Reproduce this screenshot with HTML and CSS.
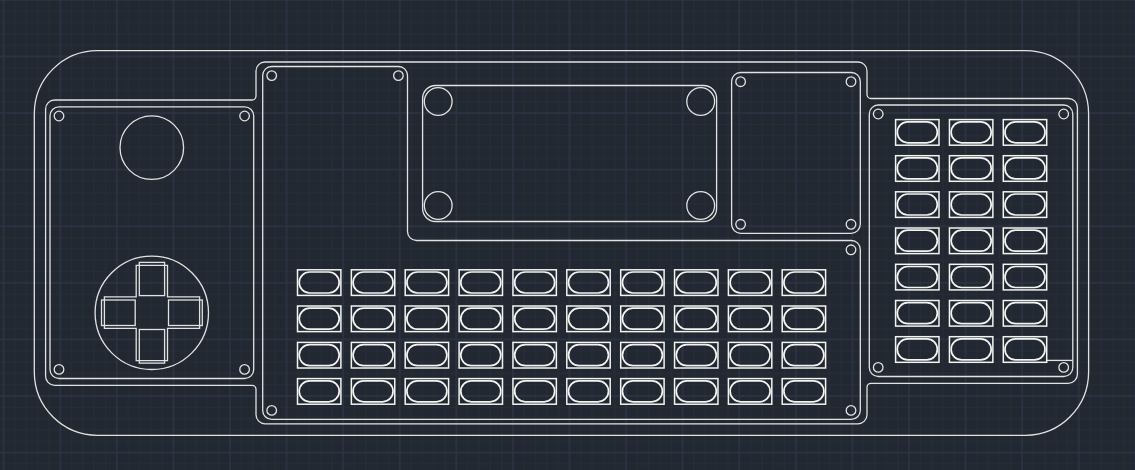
FILE: index.html
```html
<!DOCTYPE html>
<html lang="en">
<head>
<meta charset="utf-8">
<title>Keypad panel drawing</title>
<link rel="stylesheet" href="styles.css">
</head>
<body>
<main class="canvas">
<svg class="drawing" viewBox="0 0 1135 470" role="img" aria-label="Outline drawing of a keypad enclosure">
  <defs>
    <pattern id="grid" x="3.7" y="56.5" width="56.58" height="56.58" patternUnits="userSpaceOnUse">
      <path class="minor" d="M11.3 0V56.6M22.6 0V56.6M34 0V56.6M45.3 0V56.6M0 11.3H56.6M0 22.6H56.6M0 34H56.6M0 45.3H56.6"/>
      <path class="major" d="M0 0V56.6M56.58 0V56.6M0 0H56.6M0 56.58H56.6"/>
    </pattern>
    <g id="key">
      <rect class="frame" x="0" y="0" width="43.4" height="25.6"/>
      <rect class="cap" x="1.7" y="2.2" width="40" height="21" rx="10.5"/>
    </g>
    <g id="row3">
      <use href="#key"/>
      <use href="#key" x="53.86"/>
      <use href="#key" x="107.7"/>
    </g>
    <g id="row10">
      <use href="#row3"/>
      <use href="#row3" x="161.6"/>
      <use href="#row3" x="323.2"/>
      <use href="#key" x="484.7"/>
    </g>
    <circle id="screw" r="4.8"/>
    <circle id="post" r="13.9"/>
  </defs>

  <rect width="1135" height="470" fill="url(#grid)"/>

  <g class="outline">
    <rect x="34.3" y="50.6" width="1054.3" height="384.7" rx="63.2"/>
    <path d="M54.6 100H252a4 4 0 0 0 4-4V71a9 9 0 0 1 9-9H858a9 9 0 0 1 9 9V94.5a4 4 0 0 0 4 4H1068.4a9 9 0 0 1 9 9V374.3a9 9 0 0 1-9 9H871a4 4 0 0 0-4 4V414.8a9 9 0 0 1-9 9H265a9 9 0 0 1-9-9V389.3a4 4 0 0 0-4-4H54.6a9 9 0 0 1-9-9V109a9 9 0 0 1 9-9Z"/>

    <rect x="50" y="106.8" width="203.7" height="271.7" rx="9"/>
    <circle cx="151.8" cy="147.6" r="31.8"/>
    <circle cx="151.8" cy="312.8" r="56.7"/>
    <path d="M136.2 296.8V265.3H167.5V296.8H199.6V328.4H167.5V360.6H136.2V328.4H104.4V296.8Z"/>
    <rect x="139.3" y="262.4" width="25.3" height="33.2"/>
    <rect x="139.3" y="329.5" width="25.3" height="33.6"/>
    <rect x="101.5" y="300" width="33.7" height="25.5"/>
    <rect x="168.5" y="300" width="33.8" height="25.5"/>

    <path d="M271.7 66.5H398.5a9 9 0 0 1 9 9V231.5a9 9 0 0 0 9 9H851.3a9 9 0 0 1 9 9V410.4a9 9 0 0 1-9 9H271.7a9 9 0 0 1-9-9V75.5a9 9 0 0 1 9-9Z"/>
    <rect x="422.6" y="85.5" width="294" height="136" rx="13"/>
    <rect x="731.6" y="72.5" width="128.7" height="160.8" rx="9"/>
    <rect x="869.3" y="105" width="203.5" height="271.5" rx="9"/>
    <path d="M1046.7 360.4H1072.7"/>

    <use href="#post" x="438.2" y="101.5"/><use href="#post" x="700.7" y="101.5"/>
    <use href="#post" x="438.2" y="205.5"/><use href="#post" x="700.7" y="205.5"/>

    <use href="#screw" x="59" y="116"/><use href="#screw" x="244.6" y="116"/>
    <use href="#screw" x="59" y="369.4"/><use href="#screw" x="244.6" y="369.4"/>
    <use href="#screw" x="271.7" y="75.6"/><use href="#screw" x="398.4" y="75.6"/>
    <use href="#screw" x="271.7" y="410.4"/><use href="#screw" x="851" y="410.4"/>
    <use href="#screw" x="851" y="249.8"/>
    <use href="#screw" x="740.6" y="81.7"/><use href="#screw" x="851" y="81.7"/>
    <use href="#screw" x="740.6" y="224.3"/><use href="#screw" x="851" y="224.3"/>
    <use href="#screw" x="878.2" y="114"/><use href="#screw" x="1063.7" y="114"/>
    <use href="#screw" x="878.2" y="367.4"/><use href="#screw" x="1063.7" y="367.4"/>
  </g>

  <g class="keys">
    <use href="#row10" x="297.5" y="269.8"/>
    <use href="#row10" x="297.5" y="306"/>
    <use href="#row10" x="297.5" y="342.4"/>
    <use href="#row10" x="297.5" y="378.6"/>
    <use href="#row3" x="895.6" y="119.6"/>
    <use href="#row3" x="895.6" y="155.7"/>
    <use href="#row3" x="895.6" y="191.8"/>
    <use href="#row3" x="895.6" y="228"/>
    <use href="#row3" x="895.6" y="264.3"/>
    <use href="#row3" x="895.6" y="300.5"/>
    <use href="#row3" x="895.6" y="336.7"/>
  </g>
</svg>
</main>
</body>
</html>
```
FILE: styles.css
```css
body {
  margin: 0;
  background: #222831;
}

.canvas {
  overflow: hidden;
}

.drawing {
  display: block;
  width: 100%;
  height: auto;
  fill: none;
}

.minor {
  stroke: #262d37;
  stroke-width: 1;
}

.major {
  stroke: #2d3444;
  stroke-width: 1.4;
}

.outline {
  stroke: #e2e2e2;
  stroke-width: 1.3;
}

.keys {
  stroke: #f2f4f2;
}

.frame {
  stroke-width: 1.5;
}

.cap {
  stroke-width: 1.7;
}
```
